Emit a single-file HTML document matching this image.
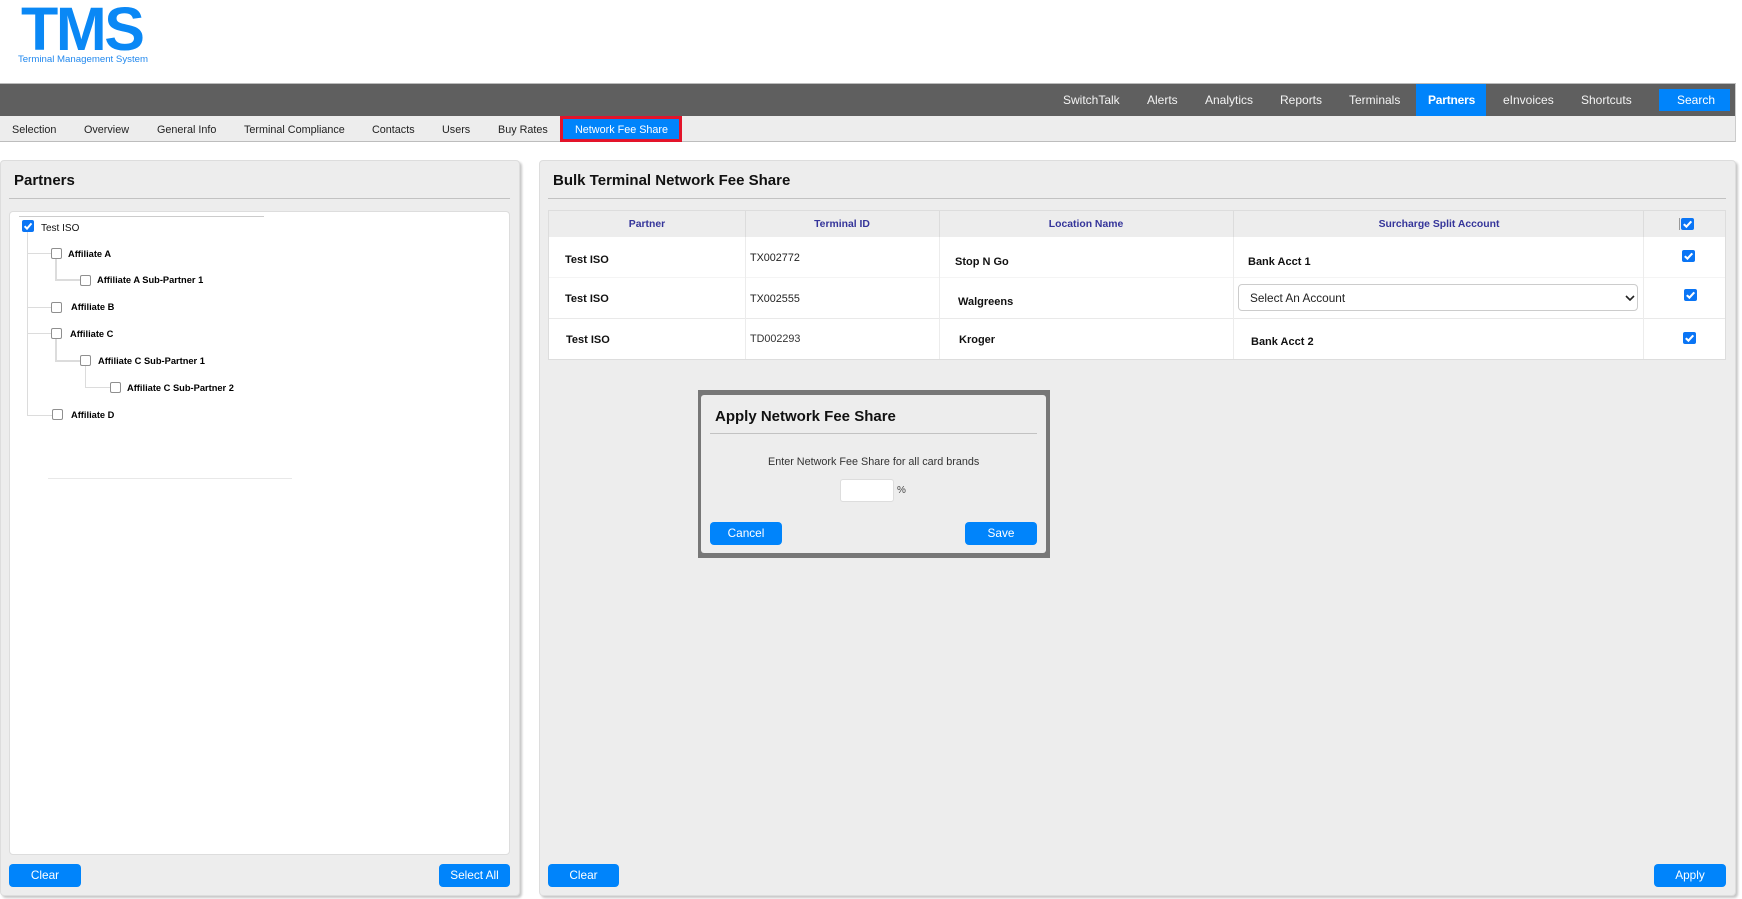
<!DOCTYPE html>
<html lang="en"><head><meta charset="utf-8"><title>Bulk Terminal Network Fee Share</title>
<style>
html,body{margin:0;padding:0;background:#fff}
body{position:relative;width:1742px;height:899px;overflow:hidden;font-family:"Liberation Sans",Arial,sans-serif;color:#222}
.a,.t,.cb,.btn,.l{position:absolute}
.t{white-space:nowrap;line-height:20px}
.nav{color:#f4f4f4;font-size:12px;top:90px}
.sub{color:#222;font-size:10.8px;top:120px}
.panel{position:absolute;background:#ededed;border:1px solid #ddd;border-radius:4px;box-shadow:2px 2px 2px #c8c8c8;box-sizing:border-box}
.hr{position:absolute;height:1px;background:#c2c2c2}
.h{font-weight:bold;font-size:15px;color:#111}
.btn{background:#0084fb;color:#fff;border-radius:4px;font-size:11.8px;text-align:center;height:23px;line-height:22px}
.cb{width:11px;height:11px;box-sizing:border-box;background:#fff;border:1px solid #8f8f8f;border-radius:2px}
.ck{width:12px;height:12px;border:0;background:#0a75f5}
.tc{width:13px}
.ck svg{display:block;width:100%;height:100%}
.l{background:#dcdcdc}
.n{font-weight:bold;font-size:9.3px;color:#000}
.th{font-weight:bold;font-size:10.4px;color:#35359a;top:215px;transform:translateX(-50%)}
.b{font-weight:bold;font-size:11px;color:#111}
.id{font-size:10.8px;color:#222}
</style></head><body>

<div class="t" style="left:21px;top:-3px;font-size:61px;line-height:64px;font-weight:bold;color:#0a88f5;letter-spacing:-2.4px">TMS</div>
<div class="t" style="left:18px;top:50px;font-size:9.65px;color:#2389ee">Terminal Management System</div>

<div class="a" style="left:0;top:83px;width:1736px;height:33px;background:#5f5f5f;border-top:1px solid #bbb;border-right:1px solid #ccc;box-sizing:border-box"></div>
<div class="a" style="left:1416px;top:84px;width:70px;height:32px;background:#0084fb"></div>
<div class="a" style="left:1659px;top:89px;width:71px;height:22px;background:#0084fb"></div>
<span class="t nav" style="left:1063px">SwitchTalk</span>
<span class="t nav" style="left:1147px">Alerts</span>
<span class="t nav" style="left:1205px">Analytics</span>
<span class="t nav" style="left:1280px">Reports</span>
<span class="t nav" style="left:1349px">Terminals</span>
<span class="t nav" style="left:1428px;font-weight:bold;color:#fff;letter-spacing:-.2px">Partners</span>
<span class="t nav" style="left:1503px">eInvoices</span>
<span class="t nav" style="left:1581px">Shortcuts</span>
<span class="t nav" style="left:1677px;color:#fff">Search</span>

<div class="a" style="left:0;top:116px;width:1736px;height:26px;background:#ededed;border-bottom:1px solid #bdbdbd;border-right:1px solid #ccc;box-sizing:border-box"></div>
<div class="a" style="left:560px;top:116px;width:122px;height:26px;background:#0084fb;border:3px solid #e3142a;box-sizing:border-box"></div>
<span class="t sub" style="left:12px">Selection</span>
<span class="t sub" style="left:84px">Overview</span>
<span class="t sub" style="left:157px">General Info</span>
<span class="t sub" style="left:244px">Terminal Compliance</span>
<span class="t sub" style="left:372px">Contacts</span>
<span class="t sub" style="left:442px">Users</span>
<span class="t sub" style="left:498px">Buy Rates</span>
<span class="t sub" style="left:575px;color:#fff">Network Fee Share</span>

<div class="panel" style="left:0;top:160px;width:520px;height:736px"></div>
<span class="t h" style="left:14px;top:171px">Partners</span>
<div class="hr" style="left:9px;top:198px;width:501px"></div>
<div class="a" style="left:9px;top:211px;width:501px;height:644px;background:#fff;border:1px solid #ddd;border-radius:4px;box-sizing:border-box"></div>
<div class="a" style="left:19px;top:216px;width:245px;height:1px;background:#ccc"></div>
<div class="a" style="left:48px;top:478px;width:244px;height:1px;background:#e8e8e8"></div>

<div class="l" style="left:27px;top:232px;width:1px;height:183px"></div>
<div class="l" style="left:27px;top:253px;width:24px;height:1px"></div>
<div class="l" style="left:27px;top:307px;width:24px;height:1px"></div>
<div class="l" style="left:27px;top:333px;width:24px;height:1px"></div>
<div class="l" style="left:27px;top:415px;width:25px;height:1px"></div>
<div class="l" style="left:55px;top:259px;width:2px;height:22px"></div>
<div class="l" style="left:55px;top:279px;width:25px;height:2px"></div>
<div class="l" style="left:55px;top:339px;width:2px;height:23px"></div>
<div class="l" style="left:55px;top:360px;width:25px;height:2px"></div>
<div class="l" style="left:85px;top:366px;width:1px;height:21px"></div>
<div class="l" style="left:85px;top:387px;width:25px;height:1px"></div>

<div class="cb ck" style="left:22px;top:220px"><svg viewBox="0 0 12 12"><path d="M2.6 6.2 5 8.6 9.5 3.4" fill="none" stroke="#fff" stroke-width="2"/></svg></div>
<span class="t" style="left:41px;top:219px;font-size:10px;color:#111">Test ISO</span>
<div class="cb" style="left:51px;top:248px"></div><span class="t n" style="left:68px;top:244px">Affiliate A</span>
<div class="cb" style="left:80px;top:275px"></div><span class="t n" style="left:97px;top:270px">Affiliate A Sub-Partner 1</span>
<div class="cb" style="left:51px;top:302px"></div><span class="t n" style="left:71px;top:297px">Affiliate B</span>
<div class="cb" style="left:51px;top:328px"></div><span class="t n" style="left:70px;top:324px">Affiliate C</span>
<div class="cb" style="left:80px;top:355px"></div><span class="t n" style="left:98px;top:351px">Affiliate C Sub-Partner 1</span>
<div class="cb" style="left:110px;top:382px"></div><span class="t n" style="left:127px;top:378px">Affiliate C Sub-Partner 2</span>
<div class="cb" style="left:52px;top:409px"></div><span class="t n" style="left:71px;top:405px">Affiliate D</span>

<div class="btn" style="left:9px;top:864px;width:72px">Clear</div>
<div class="btn" style="left:439px;top:864px;width:71px">Select All</div>

<div class="panel" style="left:539px;top:160px;width:1197px;height:736px"></div>
<span class="t h" style="left:553px;top:171px">Bulk Terminal Network Fee Share</span>
<div class="hr" style="left:548px;top:198px;width:1178px"></div>

<div class="a" style="left:548px;top:210px;width:1178px;height:150px;background:#fff;border:1px solid #ddd;box-sizing:border-box"></div>
<div class="a" style="left:549px;top:211px;width:1176px;height:26px;background:#ededed"></div>
<div class="a" style="left:549px;top:277px;width:1176px;height:1px;background:#f4f4f4"></div>
<div class="a" style="left:549px;top:318px;width:1176px;height:1px;background:#e9e9e9"></div>
<div class="a" style="left:745px;top:211px;width:1px;height:26px;background:#dcdcdc"></div>
<div class="a" style="left:939px;top:211px;width:1px;height:26px;background:#dcdcdc"></div>
<div class="a" style="left:1233px;top:211px;width:1px;height:26px;background:#dcdcdc"></div>
<div class="a" style="left:1643px;top:211px;width:1px;height:26px;background:#dcdcdc"></div>
<div class="a" style="left:745px;top:237px;width:1px;height:122px;background:#ececec"></div>
<div class="a" style="left:939px;top:237px;width:1px;height:122px;background:#ececec"></div>
<div class="a" style="left:1233px;top:237px;width:1px;height:122px;background:#ececec"></div>
<div class="a" style="left:1643px;top:237px;width:1px;height:122px;background:#ececec"></div>

<span class="t th" style="left:647px">Partner</span>
<span class="t th" style="left:842px">Terminal ID</span>
<span class="t th" style="left:1086px">Location Name</span>
<span class="t th" style="left:1439px">Surcharge Split Account</span>
<div class="a" style="left:1679px;top:218px;width:1px;height:12px;background:#999"></div>
<div class="cb ck tc" style="left:1681px;top:218px"><svg viewBox="0 0 12 12" preserveAspectRatio="none"><path d="M2.6 6.2 5 8.6 9.5 3.4" fill="none" stroke="#fff" stroke-width="2"/></svg></div>

<span class="t b" style="left:565px;top:250px">Test ISO</span>
<span class="t id" style="left:750px;top:248px">TX002772</span>
<span class="t b" style="left:955px;top:252px">Stop N Go</span>
<span class="t b" style="left:1248px;top:252px">Bank Acct 1</span>
<div class="cb ck tc" style="left:1682px;top:250px"><svg viewBox="0 0 12 12" preserveAspectRatio="none"><path d="M2.6 6.2 5 8.6 9.5 3.4" fill="none" stroke="#fff" stroke-width="2"/></svg></div>

<span class="t b" style="left:565px;top:289px">Test ISO</span>
<span class="t id" style="left:750px;top:289px">TX002555</span>
<span class="t b" style="left:958px;top:292px">Walgreens</span>
<div class="a" style="left:1238px;top:284px;width:400px;height:27px;background:#fff;border:1px solid #ccc;border-radius:4px;box-sizing:border-box"></div>
<span class="t" style="left:1250px;top:288px;font-size:11.8px;color:#222">Select An Account</span>
<svg class="a" style="left:1625px;top:295px" width="10" height="6" viewBox="0 0 10 6"><path d="M1 1l4 4 4-4" fill="none" stroke="#222" stroke-width="1.6"/></svg>
<div class="cb ck tc" style="left:1684px;top:289px"><svg viewBox="0 0 12 12" preserveAspectRatio="none"><path d="M2.6 6.2 5 8.6 9.5 3.4" fill="none" stroke="#fff" stroke-width="2"/></svg></div>

<span class="t b" style="left:566px;top:330px">Test ISO</span>
<span class="t id" style="left:750px;top:329px;color:#333">TD002293</span>
<span class="t b" style="left:959px;top:330px">Kroger</span>
<span class="t b" style="left:1251px;top:332px">Bank Acct 2</span>
<div class="cb ck tc" style="left:1683px;top:332px"><svg viewBox="0 0 12 12" preserveAspectRatio="none"><path d="M2.6 6.2 5 8.6 9.5 3.4" fill="none" stroke="#fff" stroke-width="2"/></svg></div>

<div class="a" style="left:698px;top:390px;width:352px;height:168px;background:#777"></div>
<div class="a" style="left:701px;top:395px;width:345px;height:158px;background:#ededed;border-radius:3px"></div>
<span class="t h" style="left:715px;top:407px;color:#111">Apply Network Fee Share</span>
<div class="hr" style="left:710px;top:433px;width:327px"></div>
<span class="t" style="left:768px;top:452px;font-size:10.8px;color:#333">Enter Network Fee Share for all card brands</span>
<div class="a" style="left:840px;top:479px;width:54px;height:23px;background:#fff;border:1px solid #ddd;border-radius:3px;box-sizing:border-box"></div>
<span class="t" style="left:897px;top:481px;font-size:10px;color:#444">%</span>
<div class="btn" style="left:710px;top:522px;width:72px">Cancel</div>
<div class="btn" style="left:965px;top:522px;width:72px">Save</div>

<div class="btn" style="left:548px;top:864px;width:71px">Clear</div>
<div class="btn" style="left:1654px;top:864px;width:72px">Apply</div>
</body></html>
